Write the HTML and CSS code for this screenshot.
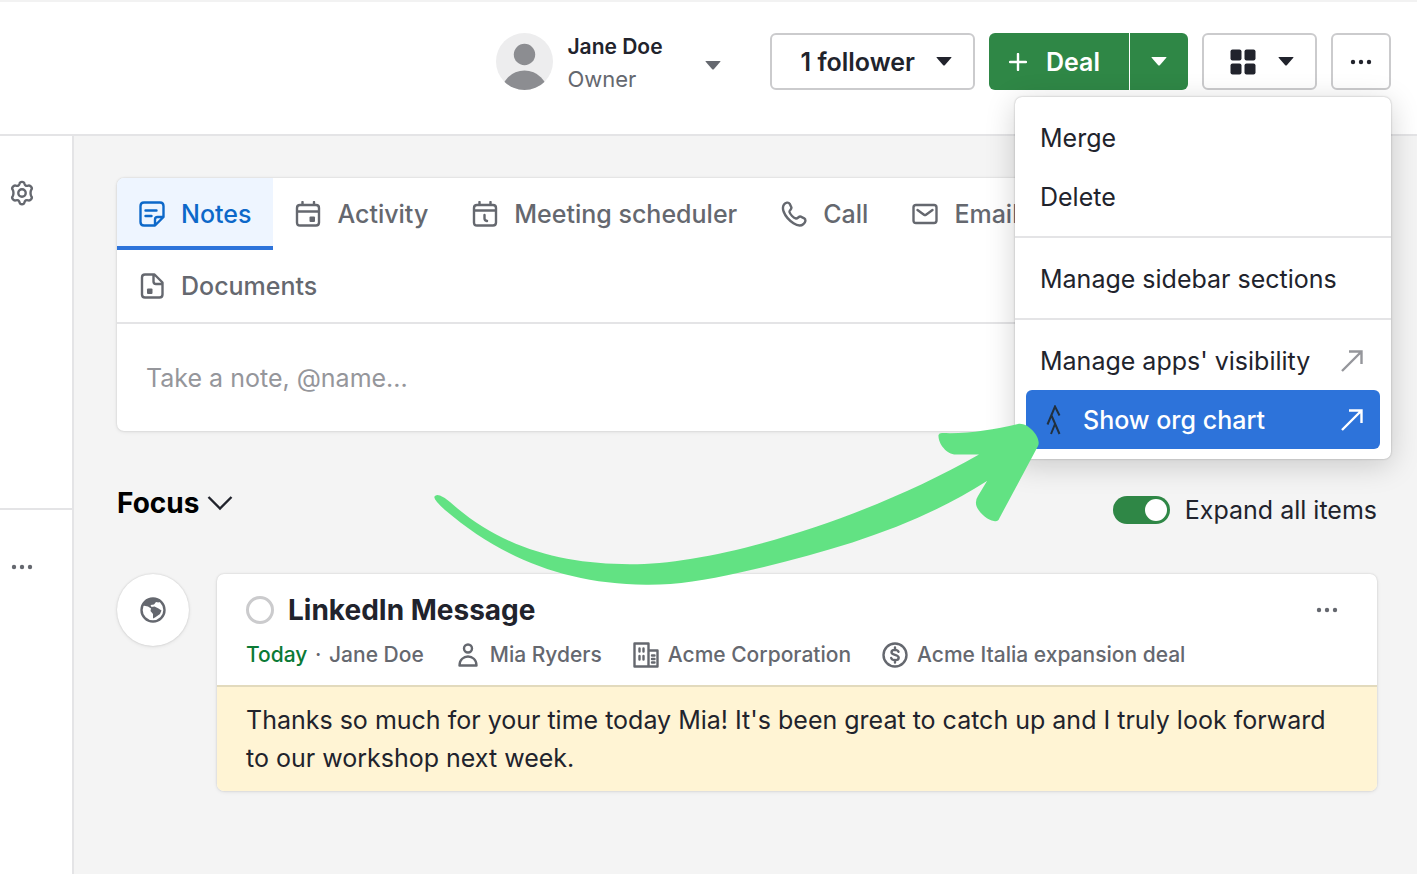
FILE: index.html
```html
<!DOCTYPE html>
<html lang="en">
  <head>
    <meta charset="UTF-8" />
    <meta name="viewport" content="width=device-width, initial-scale=1.0" />
    <title>Contact</title>
    <link rel="stylesheet" href="styles.css">
  </head>
  <body>
    <header class="topbar">
      <button class="owner" type="button">
        <svg class="avatar" viewBox="0 0 57 57" aria-hidden="true">
          <defs><clipPath id="avatarClip"><circle cx="28.5" cy="28.5" r="28.5" /></clipPath></defs>
          <g clip-path="url(#avatarClip)">
            <rect width="57" height="57" fill="#ededee" />
            <circle cx="28.5" cy="21.5" r="10.7" fill="#8c8d91" />
            <circle cx="28.5" cy="61" r="23.5" fill="#8c8d91" />
          </g>
        </svg>
        <span class="owner-text">
          <span class="owner-name">Jane Doe</span>
          <span class="owner-role">Owner</span>
        </span>
        <svg class="caret" viewBox="0 0 16 9" aria-hidden="true"><path d="M1 0h14q1 0 .3.8L9 8q-1 1-2 0L.7.8Q0 0 1 0z" /></svg>
      </button>
      <button class="btn btn-follower" type="button">
        1 follower
        <svg class="caret" viewBox="0 0 16 9" aria-hidden="true"><path d="M1 0h14q1 0 .3.8L9 8q-1 1-2 0L.7.8Q0 0 1 0z" /></svg>
      </button>
      <div class="split">
        <button class="btn-green btn-deal" type="button">
          <svg class="plus" viewBox="0 0 18 18" aria-hidden="true"><path d="M9 1v16M1 9h16" /></svg>
          Deal
        </button>
        <button class="btn-green btn-deal-more" type="button" aria-label="More deal options">
          <svg class="caret" viewBox="0 0 16 9" aria-hidden="true"><path d="M1 0h14q1 0 .3.8L9 8q-1 1-2 0L.7.8Q0 0 1 0z" /></svg>
        </button>
      </div>
      <button class="btn btn-grid" type="button" aria-label="Apps">
        <svg class="grid-icon" viewBox="0 0 26 26" aria-hidden="true">
          <rect x="0.5" y="0.5" width="11" height="11" rx="2" />
          <rect x="14.5" y="0.5" width="11" height="11" rx="2" />
          <rect x="0.5" y="14.5" width="11" height="11" rx="2" />
          <rect x="14.5" y="14.5" width="11" height="11" rx="2" />
        </svg>
        <svg class="caret" viewBox="0 0 16 9" aria-hidden="true"><path d="M1 0h14q1 0 .3.8L9 8q-1 1-2 0L.7.8Q0 0 1 0z" /></svg>
      </button>
      <div class="more">
        <button class="btn btn-more" type="button" aria-label="More actions" aria-expanded="true">
          <svg class="dots" viewBox="0 0 22 6" aria-hidden="true"><circle cx="3" cy="3" r="2.2" /><circle cx="11" cy="3" r="2.2" /><circle cx="19" cy="3" r="2.2" /></svg>
        </button>
        <div class="menu">
          <div class="menu-section">
            <button class="menu-item" type="button">Merge</button>
            <button class="menu-item" type="button">Delete</button>
          </div>
          <div class="menu-section">
            <button class="menu-item" type="button">Manage sidebar sections</button>
          </div>
          <div class="menu-section">
            <a class="menu-item" href="#">
              Manage apps' visibility
              <svg class="external" viewBox="0 0 22 22" aria-hidden="true"><path d="M1 21L20.5 1.5M8 1.5h12.5V14" /></svg>
            </a>
            <a class="menu-item active" href="#">
              <svg class="app-logo" viewBox="0 0 16 30" aria-hidden="true"><path d="M1.5 19.5L9 1.5l4.500 9M5.500 10.500L13.500 29M9 19L5 29" /></svg>
              Show org chart
              <svg class="external" viewBox="0 0 22 22" aria-hidden="true"><path d="M1 21L20.5 1.5M8 1.5h12.5V14" /></svg>
            </a>
          </div>
        </div>
      </div>
    </header>

    <div class="layout">
      <aside class="sidebar">
        <div class="side-section side-settings">
          <button class="icon-btn" type="button" aria-label="Settings">
            <svg class="icon" viewBox="0 0 26 26" aria-hidden="true">
              <path d="M10.600 3.400C11 1.300 15 1.300 15.400 3.400C15.900 5.600 17.200 6.300 19.300 5.600C21.300 5 23.900 8 22.300 9.800C21.300 11.200 21.300 14.800 22.300 16.200C23.900 18 21.300 21 19.300 20.400C17.200 19.700 15.900 20.400 15.400 22.600C15 24.700 11 24.700 10.600 22.600C10.100 20.400 8.800 19.700 6.700 20.400C4.700 21 2.100 18 3.700 16.200C4.700 14.800 4.700 11.200 3.700 9.800C2.100 8 4.700 5 6.700 5.600C8.800 6.300 10.100 5.600 10.600 3.400z" />
              <circle cx="13" cy="13" r="3.700" />
            </svg>
          </button>
        </div>
        <div class="side-section side-options">
          <button class="icon-btn" type="button" aria-label="Section options">
            <svg class="dots" viewBox="0 0 22 6" aria-hidden="true"><circle cx="3" cy="3" r="2.2" /><circle cx="11" cy="3" r="2.2" /><circle cx="19" cy="3" r="2.2" /></svg>
          </button>
        </div>
      </aside>

      <main class="content">
        <section class="composer">
          <div class="tabs">
            <div class="tab-row">
              <button class="tab selected" type="button">
                <svg class="icon" viewBox="0 0 26 26" aria-hidden="true"><path d="M16 24.500H5Q1.500 24.500 1.500 21V5Q1.500 1.500 5 1.500H21Q24.500 1.500 24.500 5V16zM16 24V18.500Q16 16 18.500 16H24M6.500 9.500H17.500M6.500 15H12.500" /></svg>
                Notes
              </button>
              <button class="tab" type="button">
                <svg class="icon" viewBox="0 0 26 26" aria-hidden="true"><path d="M5 4H21Q24 4 24 7V21.500Q24 24.500 21 24.500H5Q2 24.500 2 21.500V7Q2 4 5 4zM2 10.500H24M7.500 4V1M19 4V1" /><rect class="solid" x="14.500" y="15.500" width="5.500" height="5.500" rx="1" /></svg>
                Activity
              </button>
              <button class="tab" type="button">
                <svg class="icon" viewBox="0 0 26 26" aria-hidden="true"><path d="M5 4H21Q24 4 24 7V21.500Q24 24.500 21 24.500H5Q2 24.500 2 21.500V7Q2 4 5 4zM2 9.500H24M7.500 4V1M18.500 4V1M12.500 14V17.500Q12.500 19.500 15 20" /></svg>
                Meeting scheduler
              </button>
              <button class="tab" type="button">
                <svg class="icon" viewBox="0 0 26 26" aria-hidden="true"><path d="M3 3.500C4.500 1.500 7.500 0.800 8.700 2.800L10.300 6.200C11.200 8.200 8.200 9 8.500 11C9.200 13.500 12.500 17 15 17.500C17 17.800 17.800 14.800 19.800 15.700L23.200 17.300C25.200 18.500 24.500 21.500 22.500 23C20 25.200 16.500 25 12.500 22.300C8 19.300 4.500 15.500 2.700 10.800C1.700 8 1.700 5.200 3 3.500z" /></svg>
                Call
              </button>
              <button class="tab" type="button">
                <svg class="icon" viewBox="0 0 26 26" aria-hidden="true"><path d="M4 4H22Q24.500 4 24.500 6.500V19.500Q24.500 22 22 22H4Q1.500 22 1.500 19.500V6.500Q1.500 4 4 4zM5.500 9L12 13.700Q13 14.400 14 13.700L20.500 9" /></svg>
                Email
              </button>
            </div>
            <div class="tab-row">
              <button class="tab" type="button">
                <svg class="icon" viewBox="0 0 26 26" aria-hidden="true"><path d="M15.500 1.500H6Q3 1.500 3 4.500V21.500Q3 24.500 6 24.500H20.500Q23.500 24.500 23.500 21.500V9.500zM14.500 2V8.500Q14.500 11 17 11H23" /><rect class="solid" x="8" y="15.500" width="5.500" height="5.500" rx="1" /></svg>
                Documents
              </button>
            </div>
          </div>
          <input class="note-input" type="text" aria-label="Note" placeholder="Take a note, @name..." />
        </section>

        <div class="focus-bar">
          <button class="focus-title" type="button">
            Focus
            <svg class="chevron" viewBox="0 0 26 16" aria-hidden="true"><path d="M1.500 2L13 13.500L24.500 2" /></svg>
          </button>
          <label class="switch-label">
            <input class="switch" type="checkbox" checked />
            Expand all items
          </label>
        </div>

        <div class="focus-item">
          <div class="item-badge">
            <svg class="icon" viewBox="0 0 26 26" aria-hidden="true">
              <circle cx="13" cy="13" r="11.500" />
              <path class="land" d="M3 7L6 3L12 1L20 4L18.500 5.500L16 5L14 7.500L10.500 8L11.500 10L14.500 9.500L18.500 11.500L21.500 13.500L20 17L15 20.500L13 21.500L13 17L10.500 14L11 11.500L8 9.500L3 8.500z" />
            </svg>
          </div>
          <article class="card">
            <div class="card-head">
              <div class="card-title">
                <input class="done-check" type="checkbox" aria-label="Mark as done" />
                <h3>LinkedIn Message</h3>
                <button class="icon-btn card-more" type="button" aria-label="Item options">
                  <svg class="dots" viewBox="0 0 22 6" aria-hidden="true"><circle cx="3" cy="3" r="2.2" /><circle cx="11" cy="3" r="2.2" /><circle cx="19" cy="3" r="2.2" /></svg>
                </button>
              </div>
              <div class="meta">
                <span><span class="today">Today</span> <span class="sep">·</span> Jane Doe</span>
                <a class="meta-link" href="#">
                  <svg class="icon" viewBox="0 0 26 26" aria-hidden="true"><circle cx="13" cy="6.500" r="4" /><path d="M4.500 23.500C4.500 11.500 21.500 11.500 21.500 23.500z" /></svg>
                  Mia Ryders
                </a>
                <a class="meta-link" href="#">
                  <svg class="icon" viewBox="0 0 26 26" aria-hidden="true"><path d="M1.500 1.500H15.500V24.500H1.500zM15.500 8.500H24.500V24.500H15.500M6.500 6.500V9.500M10.500 6.500V9.500M6.500 14V17.500M10.500 14V17.500M19 13.500H21.500M19 17H21.500M19 20.500H21.500" /></svg>
                  Acme Corporation
                </a>
                <a class="meta-link" href="#">
                  <svg class="icon" viewBox="0 0 26 26" aria-hidden="true"><circle cx="13" cy="13" r="11.500" /><path d="M16.500 9.800C15.500 7.200 9.500 7.200 9.500 10.300C9.500 13.500 16.700 12.200 16.700 15.700C16.700 18.900 10 18.900 9.200 16M13 5.500V8M13 18V20.500" /></svg>
                  Acme Italia expansion deal
                </a>
              </div>
            </div>
            <p class="card-body">Thanks so much for your time today Mia! It's been great to catch up and I truly look forward to our workshop next week.</p>
          </article>
        </div>
      </main>
    </div>

    <svg class="pointer-arrow" viewBox="0 0 606 163" aria-hidden="true">
      <path d="M0.500 74.500Q2 72 6 73.500Q11 75.500 16 80C68 127 130 142 196 142.300C282 142.500 430 98 545 32.500H522C512 32.500 504 21 504.500 13Q505 11 508 11C534 12 558 8 584 2C594 0 608 16 604 24L565.500 96Q564 100 560 99C552 98 541 87 542 80Q542 77 544 74L553 59C480 106 392 131 306 150.500C270 158.700 242 163 212 162.700C130 162 66 135 11 88Q-1 77 0.500 74.500z" />
    </svg>
  </body>
</html>
```
FILE: styles.css
```css
* {
  box-sizing: border-box;
}
body {
  position: relative;
  display: flex;
  flex-direction: column;
  min-height: 100vh;
  margin: 0;
  font-family: Inter, sans-serif;
  font-size: 25px;
  color: #21232c;
  background-color: #f4f4f4;
}
button,
input {
  font: inherit;
  color: inherit;
}
button {
  display: flex;
  align-items: center;
  padding: 0;
  border: none;
  background: none;
  cursor: pointer;
}
a {
  color: inherit;
  text-decoration: none;
}
svg {
  flex: none;
}
.icon {
  width: 26px;
  height: 26px;
  fill: none;
  stroke: currentColor;
  stroke-width: 2.4;
  stroke-linecap: round;
  stroke-linejoin: round;
}
.icon .solid {
  fill: currentColor;
  stroke: none;
}
.icon .land {
  fill: currentColor;
  stroke: none;
}
.dots {
  width: 22px;
  height: 6px;
  fill: currentColor;
}
.caret {
  width: 16px;
  height: 9px;
  fill: currentColor;
}

/* Top bar */
.topbar {
  display: flex;
  justify-content: flex-end;
  align-items: center;
  gap: 14px;
  height: 136px;
  padding: 0 26px 13px 0;
  border-top: 2px solid #f2f2f2;
  border-bottom: 2px solid #e4e4e6;
  background: #fff;
}
.owner {
  gap: 14px;
  margin-right: 35px;
  color: #65686f;
  text-align: left;
}
.avatar {
  width: 57px;
  height: 57px;
}
.owner-text {
  display: flex;
  flex-direction: column;
  padding-top: 3px;
  font-size: 22px;
  line-height: 32px;
}
.owner-name {
  color: #21232c;
  font-size: 21px;
  font-weight: 600;
}
.owner .caret {
  margin: 7px 0 0 28px;
}
.btn {
  justify-content: center;
  height: 57px;
  border: 2px solid #cbcbcd;
  border-radius: 6px;
  background: #fff;
  font-weight: 600;
}
.btn-follower {
  gap: 21px;
  padding: 0 21px 0 29px;
}
.split {
  display: flex;
  gap: 1px;
}
.btn-green {
  height: 57px;
  background: #2f8746;
  color: #fff;
  font-weight: 600;
}
.btn-deal {
  gap: 19px;
  padding: 0 29px 0 20px;
  border-radius: 6px 0 0 6px;
}
.btn-deal-more {
  padding: 0 21px;
  border-radius: 0 6px 6px 0;
}
.plus {
  width: 18px;
  height: 18px;
  stroke: #fff;
  stroke-width: 2.4;
  stroke-linecap: round;
}
.btn-grid {
  gap: 22px;
  padding: 0 21px 0 26px;
}
.grid-icon {
  width: 26px;
  height: 26px;
  fill: currentColor;
}
.more {
  position: relative;
}
.btn-more {
  width: 60px;
}

/* Dropdown menu */
.menu {
  position: absolute;
  top: 64px;
  right: 0;
  z-index: 1;
  width: 376px;
  border-radius: 7px;
  background: #fff;
  box-shadow: 0 0 2px rgba(0, 0, 0, 0.3), 0 6px 30px rgba(0, 0, 0, 0.18);
}
.menu-section {
  padding: 11px 11px 10px;
}
.menu-section + .menu-section {
  border-top: 2px solid #e4e4e6;
}
.menu-item {
  display: flex;
  align-items: center;
  width: 100%;
  height: 59px;
  padding: 0 17px 0 14px;
  border-radius: 6px;
  white-space: nowrap;
}
.menu-item.active {
  background: #2d73da;
  color: #fff;
  font-weight: 500;
}
.external {
  width: 22px;
  height: 22px;
  margin-left: auto;
  fill: none;
  stroke: #95969b;
  stroke-width: 2.4;
}
.active .external {
  stroke: #fff;
}
.app-logo {
  width: 16px;
  height: 30px;
  margin: 0 21px 0 6px;
  fill: none;
  stroke: #21303f;
  stroke-width: 2;
}

/* Page */
.layout {
  display: flex;
  flex: 1;
}
.sidebar {
  flex: none;
  width: 74px;
  border-right: 2px solid #e4e4e6;
  background: #fff;
  color: #65686f;
}
.side-section {
  padding: 44px 9px;
}
.side-settings {
  min-height: 374px;
  border-bottom: 2px solid #e4e4e6;
}
.icon-btn {
  justify-content: center;
  width: 26px;
  height: 26px;
  color: #65686f;
}
.content {
  flex: 1;
  min-width: 0;
  padding: 42px 40px 42px 43px;
}

/* Note composer */
.composer,
.card {
  border-radius: 7px;
  background: #fff;
  box-shadow: 0 0 2px rgba(0, 0, 0, 0.16), 0 1px 4px rgba(0, 0, 0, 0.08);
  overflow: hidden;
}
.tabs {
  border-bottom: 2px solid #e4e4e6;
}
.tab-row {
  display: flex;
}
.tab {
  gap: 16px;
  height: 72px;
  padding: 0 22px;
  color: #65686f;
  font-weight: 500;
  white-space: nowrap;
}
.tab.selected {
  background: #eef5ff;
  color: #0d68c9;
  box-shadow: inset 0 -4px #2d73da;
}
.note-input {
  display: block;
  width: 100%;
  height: 107px;
  padding: 0 29px;
  border: none;
  background: none;
  outline: none;
}
.note-input::placeholder {
  color: #95969b;
  opacity: 1;
}

/* Focus list */
.focus-bar {
  display: flex;
  justify-content: space-between;
  align-items: center;
  height: 143px;
}
.focus-title {
  gap: 8px;
  color: #000;
  font-size: 28px;
  font-weight: 700;
}
.chevron {
  width: 26px;
  height: 16px;
  fill: none;
  stroke: #21232c;
  stroke-width: 2.4;
}
.switch-label {
  display: flex;
  align-items: center;
  gap: 15px;
  padding-top: 14px;
}
.switch {
  display: flex;
  justify-content: flex-end;
  appearance: none;
  width: 57px;
  height: 28px;
  margin: 0;
  padding: 3px;
  border-radius: 14px;
  background: #2f8746;
}
.switch::before {
  content: "";
  width: 22px;
  height: 22px;
  border-radius: 50%;
  background: #fff;
}
.focus-item {
  display: flex;
  align-items: flex-start;
  gap: 28px;
}
.item-badge {
  display: flex;
  flex: none;
  justify-content: center;
  align-items: center;
  width: 72px;
  height: 72px;
  border-radius: 50%;
  background: #fff;
  color: #65686f;
  box-shadow: 0 0 2px rgba(0, 0, 0, 0.16), 0 1px 4px rgba(0, 0, 0, 0.08);
}
.card {
  flex: 1;
  min-width: 0;
}
.card-head {
  padding: 18px 29px 13px;
  border-bottom: 2px solid #e2dabd;
}
.card-title {
  display: flex;
  align-items: center;
  gap: 14px;
  height: 36px;
}
.card-title h3 {
  margin: 0;
  font-size: 28px;
  font-weight: 700;
}
.done-check {
  appearance: none;
  width: 28px;
  height: 28px;
  margin: 0;
  border: 3px solid #cbcbcd;
  border-radius: 50%;
}
.card-more {
  margin: 0 8px 0 auto;
}
.meta {
  display: flex;
  flex-wrap: wrap;
  gap: 0 31px;
  margin-top: 9px;
  color: #65686f;
  font-size: 21px;
  font-weight: 500;
  line-height: 35px;
}
.today {
  color: #0b7a35;
}
.sep {
  margin: 0 2px;
}
.meta-link {
  display: flex;
  align-items: center;
  gap: 9px;
}
.card-body {
  margin: 0;
  padding: 14px 29px;
  background: #fff4d4;
  line-height: 38px;
}

/* Hand drawn arrow over the page */
.pointer-arrow {
  position: absolute;
  top: 422px;
  right: 377px;
  z-index: 2;
  width: 606px;
  height: 163px;
  fill: #62e283;
  pointer-events: none;
}
```
